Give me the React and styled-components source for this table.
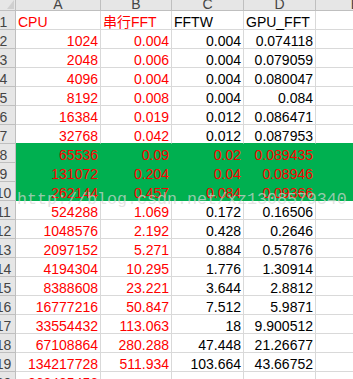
import styled, { createGlobalStyle } from "styled-components";

const GREEN = "#00b050";
const GRID = "#d9d9d9";
const HEAD_LINE = "#bfbfbf";

const Global = createGlobalStyle`
  html, body {
    margin: 0;
    padding: 0;
    background: #fff;
    overflow: hidden;
  }
  body {
    font-family: "Liberation Sans", Arial, sans-serif;
  }
`;

const Frame = styled.div`
  position: relative;
  width: 353px;
  height: 379px;
  overflow: hidden;
  background: #fff;
`;

// sheet is scrolled a bit: row header and column header are cut off
const Sheet = styled.div`
  margin: -10px 0 0 -8px;
`;

const Row = styled.div`
  display: grid;
  grid-template-columns: 24px 85px 71px 72px 72px 80px;
`;

const Corner = styled.div`
  position: relative;
  height: 21px;
  box-sizing: border-box;
  background: #e6e6e6;
  border-right: 1px solid ${HEAD_LINE};
  border-bottom: 1px solid ${HEAD_LINE};

  &::after {
    content: "";
    position: absolute;
    right: 1px;
    bottom: 1px;
    width: 0;
    height: 0;
    border-left: 7px solid transparent;
    border-bottom: 9px solid #cfcfcf;
  }
`;

const ColHead = styled.div`
  height: 21px;
  box-sizing: border-box;
  padding-top: 8px;
  line-height: 12px;
  font-size: 14px;
  text-align: center;
  color: #444;
  background: #e6e6e6;
  border-right: 1px solid ${HEAD_LINE};
  border-bottom: 1px solid ${HEAD_LINE};
`;

const RowHead = styled.div`
  height: 19px;
  box-sizing: border-box;
  padding-top: 4px;
  line-height: 14px;
  font-size: 14px;
  text-align: center;
  color: #444;
  background: #e6e6e6;
  border-right: 1px solid ${HEAD_LINE};
  border-bottom: 1px solid ${HEAD_LINE};
`;

const Cell = styled.div`
  height: 19px;
  box-sizing: border-box;
  padding: 4px 2px 0 2px;
  line-height: 14px;
  font-size: 14px;
  white-space: nowrap;
  font-family: "Liberation Sans", "Noto Sans CJK SC", sans-serif;
  text-align: ${(p) => (p.$left ? "left" : "right")};
  color: ${(p) => (p.$red ? "#ff0000" : "#000")};
  background: ${(p) => (p.$fill ? GREEN : "#fff")};
  border-right: 1px solid ${(p) => (p.$fill ? GREEN : GRID)};
  border-bottom: 1px solid ${(p) => (p.$fill || p.$edge ? GREEN : GRID)};
`;

const Watermark = styled.div`
  position: absolute;
  left: 17px;
  top: 191px;
  font-family: "Liberation Mono", monospace;
  font-size: 16.67px;
  line-height: 17px;
  white-space: nowrap;
  color: rgba(215, 215, 215, 0.7);
  pointer-events: none;
`;

const rows = [
  ["CPU", "串行FFT", "FFTW", "GPU_FFT"],
  ["1024", "0.004", "0.004", "0.074118"],
  ["2048", "0.006", "0.004", "0.079059"],
  ["4096", "0.004", "0.004", "0.080047"],
  ["8192", "0.008", "0.004", "0.084"],
  ["16384", "0.019", "0.012", "0.086471"],
  ["32768", "0.042", "0.012", "0.087953"],
  ["65536", "0.09", "0.02", "0.089435"],
  ["131072", "0.204", "0.04", "0.08946"],
  ["262144", "0.457", "0.084", "0.09366"],
  ["524288", "1.069", "0.172", "0.16506"],
  ["1048576", "2.192", "0.428", "0.2646"],
  ["2097152", "5.271", "0.884", "0.57876"],
  ["4194304", "10.295", "1.776", "1.30914"],
  ["8388608", "23.221", "3.644", "2.8812"],
  ["16777216", "50.847", "7.512", "5.9871"],
  ["33554432", "113.063", "18", "9.900512"],
  ["67108864", "280.288", "47.448", "21.26677"],
  ["134217728", "511.934", "103.664", "43.66752"],
  ["268435456", "", "", ""],
];

const filled = (n) => n >= 8 && n <= 10;

export default function App() {
  return (
    <Frame>
      <Global />
      <Sheet>
        <Row>
          <Corner />
          {["A", "B", "C", "D", "E"].map((c) => (
            <ColHead key={c}>{c}</ColHead>
          ))}
        </Row>
        {rows.map((r, i) => {
          const n = i + 1;
          const fill = filled(n);
          const edge = filled(n + 1);
          const left = n === 1;
          return (
            <Row key={n}>
              <RowHead>{n}</RowHead>
              {r.map((v, j) => (
                <Cell
                  key={j}
                  $left={left}
                  $red={j < 2 || fill}
                  $fill={fill}
                  $edge={edge}
                >
                  {v}
                </Cell>
              ))}
              <Cell $fill={fill} $edge={edge} />
            </Row>
          );
        })}
      </Sheet>
      <Watermark>http://blog.csdn.net/xz1308579340</Watermark>
    </Frame>
  );
}
